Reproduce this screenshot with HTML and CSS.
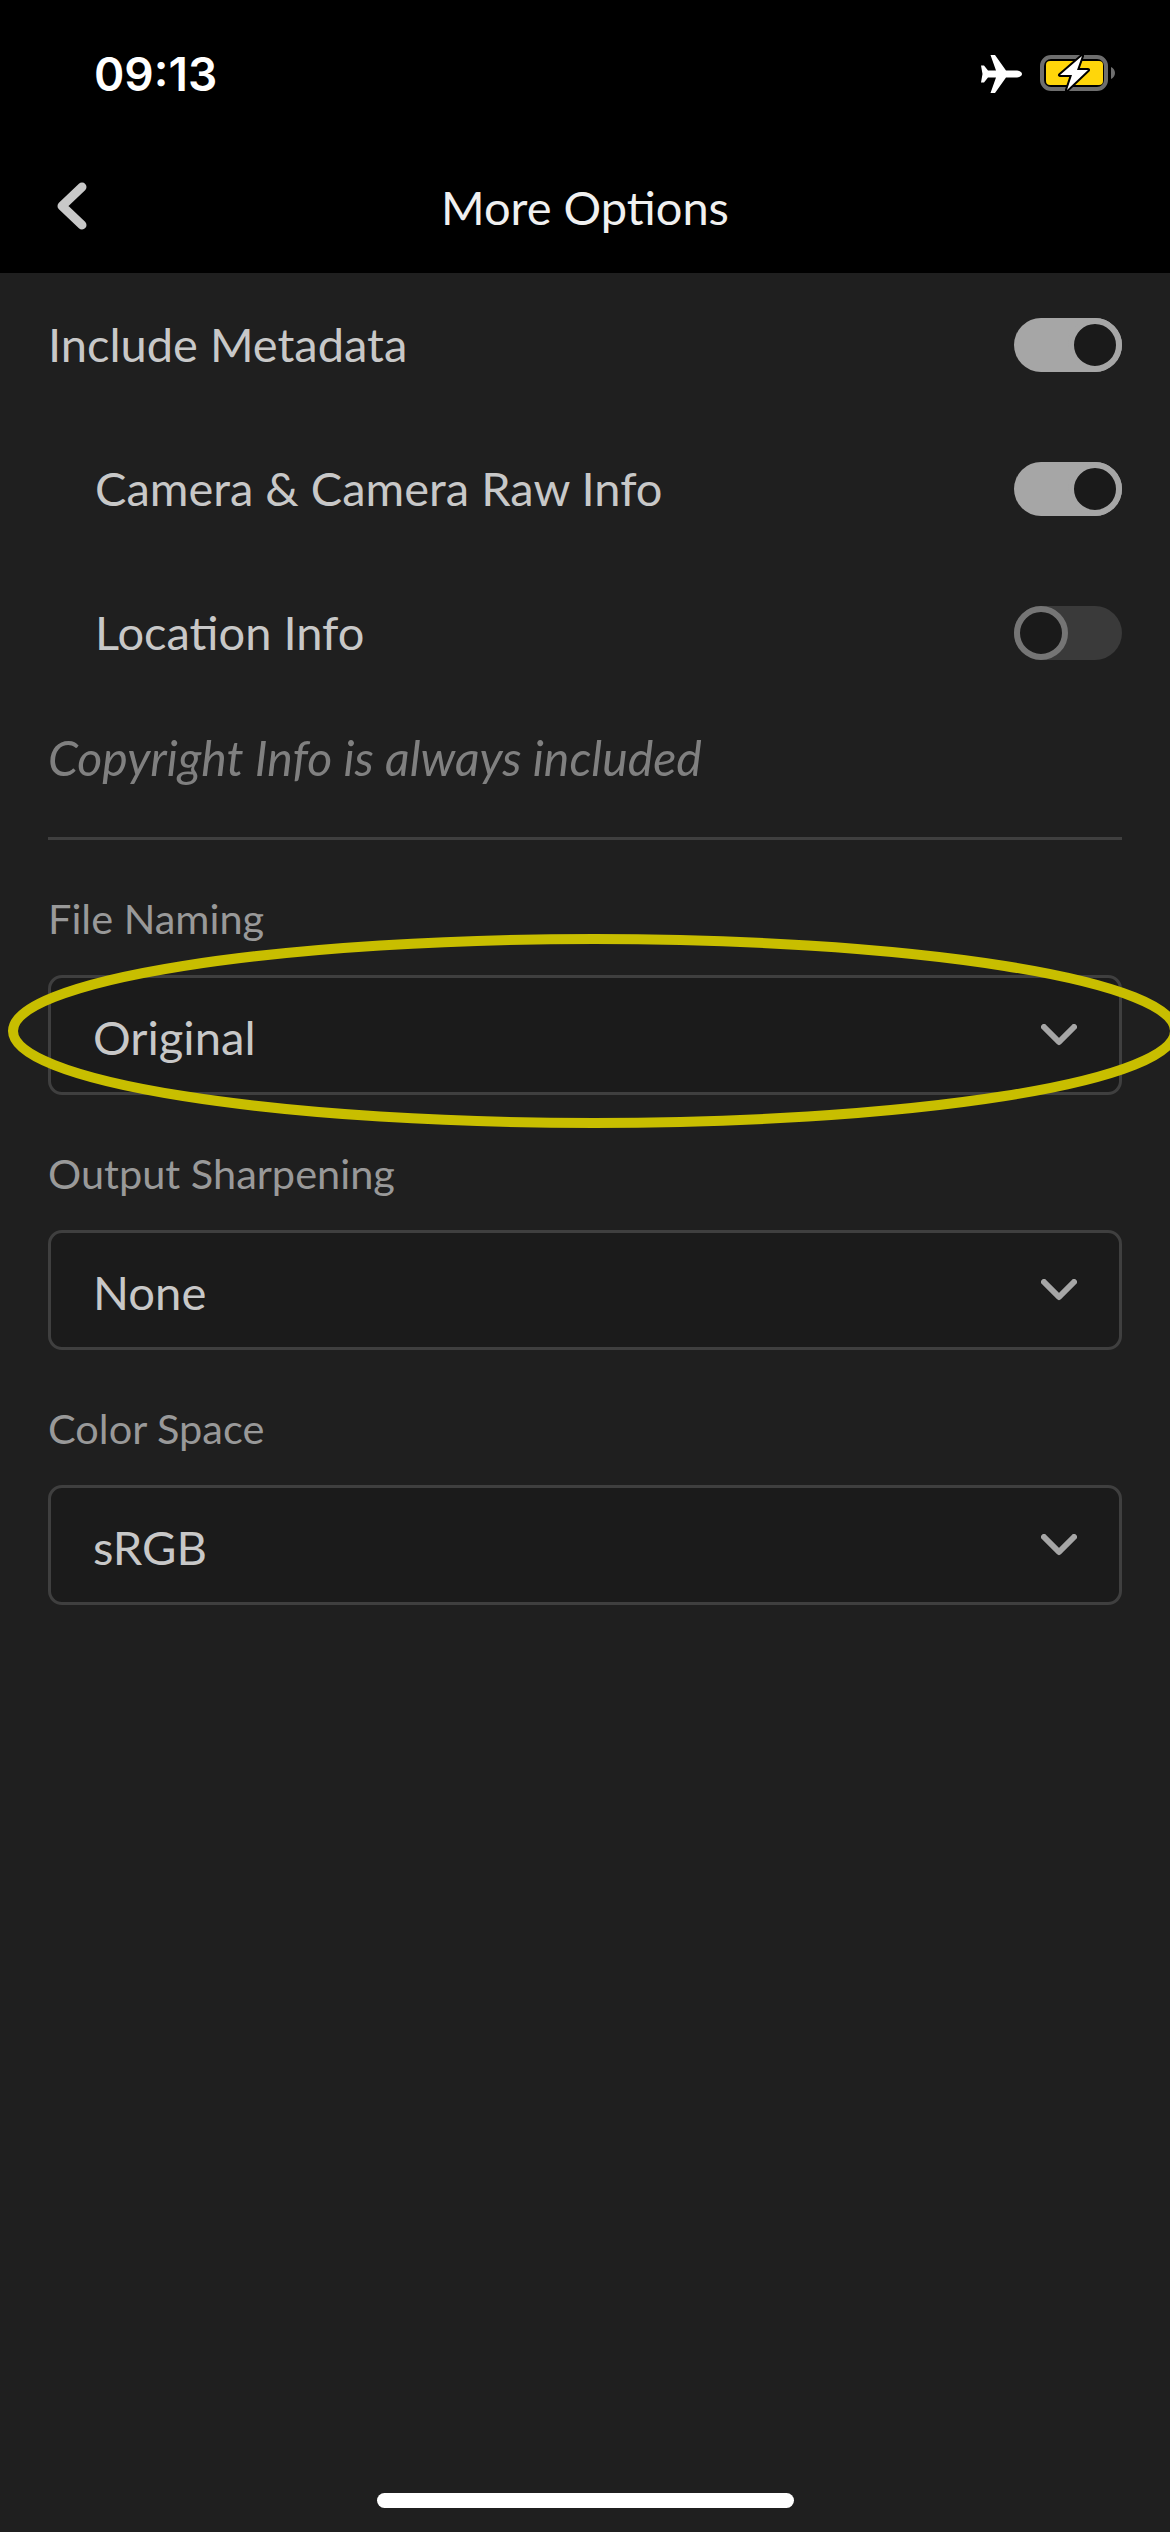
FILE: index.html
```html
<!DOCTYPE html>
<html lang="en">
<head>
  <meta charset="UTF-8">
  <meta name="viewport" content="width=device-width, initial-scale=1.0">
  <title>More Options</title>
  <link rel="stylesheet" href="styles.css">
</head>
<body>
  <div class="screen">
    <header class="top">
      <div class="status">
        <span class="time">09:13</span>
        <div class="status-icons">
          <svg class="plane" width="42" height="38" viewBox="0 0 42 38">
            <path d="M42 19c0 2-3 3.5-6 3.5H26L15 38h-4.500L16 22.500H8L4 27.500H1L2.500 19 1 10.500h3l4 5h8L10.500 0H15l11 15.500h10c3 0 6 1.500 6 3.500z" fill="#fff"/>
          </svg>
          <svg class="battery" width="75" height="36" viewBox="0 0 75 36">
            <rect x="2" y="2" width="64" height="32" rx="9" fill="none" stroke="#6e6e6e" stroke-width="4"/>
            <rect x="6" y="6" width="57" height="24" rx="4" fill="#ffd60a"/>
            <path d="M71 12c2.500 1 4 3.500 4 6s-1.500 5-4 6z" fill="#6e6e6e"/>
            <path d="M42 1L20 20h12l-5 15 21-20H37z" fill="#fff" stroke="#000" stroke-width="4" stroke-linejoin="round" paint-order="stroke"/>
          </svg>
        </div>
      </div>
      <nav class="navbar">
        <a class="back" href="#" aria-label="Back">
          <svg width="30" height="48" viewBox="0 0 30 48">
            <path d="M25 5L5 24l20 19" fill="none" stroke="#c8c8c8" stroke-width="9" stroke-linecap="round" stroke-linejoin="round"/>
          </svg>
        </a>
        <h1>More Options</h1>
      </nav>
    </header>

    <main class="content">
      <div class="row">
        <span class="row-label">Include Metadata</span>
        <span class="toggle on"><span class="knob"></span></span>
      </div>
      <div class="row sub">
        <span class="row-label">Camera &amp; Camera Raw Info</span>
        <span class="toggle on"><span class="knob"></span></span>
      </div>
      <div class="row sub">
        <span class="row-label">Location Info</span>
        <span class="toggle"><span class="knob"></span></span>
      </div>
      <p class="note">Copyright Info is always included</p>
      <hr class="divider">

      <div class="field">
        <label class="field-label">File Naming</label>
        <div class="select">
          <span>Original</span>
          <svg width="36" height="22" viewBox="0 0 36 22"><path d="M3 3l15 15L33 3" fill="none" stroke="#a6a6a6" stroke-width="6" stroke-linecap="round" stroke-linejoin="round"/></svg>
        </div>
      </div>
      <div class="field">
        <label class="field-label">Output Sharpening</label>
        <div class="select">
          <span>None</span>
          <svg width="36" height="22" viewBox="0 0 36 22"><path d="M3 3l15 15L33 3" fill="none" stroke="#a6a6a6" stroke-width="6" stroke-linecap="round" stroke-linejoin="round"/></svg>
        </div>
      </div>
      <div class="field">
        <label class="field-label">Color Space</label>
        <div class="select">
          <span>sRGB</span>
          <svg width="36" height="22" viewBox="0 0 36 22"><path d="M3 3l15 15L33 3" fill="none" stroke="#a6a6a6" stroke-width="6" stroke-linecap="round" stroke-linejoin="round"/></svg>
        </div>
      </div>
    </main>

    <div class="home-bar"></div>

    <!-- Yellow hand marking around File Naming -->
    <svg class="marker" width="1170" height="210" viewBox="0 0 1170 210">
      <ellipse cx="594" cy="105" rx="581" ry="92" fill="none" stroke="#c8be00" stroke-width="10"/>
    </svg>
  </div>
</body>
</html>
```

FILE: styles.css
```css
:root {
  --bg: #1f1f1f;
  --well: #1b1b1b;
  --line: #3f3f3f;
  --text: #c8c8c8;
  --muted: #999999;
  --on: #a6a6a6;
}
* { margin: 0; padding: 0; box-sizing: border-box; }
body {
  background: var(--bg);
  color: var(--text);
  font-family: Lato, "Open Sans", sans-serif;
}
.screen {
  position: relative;
  width: 1170px;
  height: 2532px;
  display: flex;
  flex-direction: column;
  overflow: hidden;
}

/* Header */
.top { background: #000; height: 273px; flex-shrink: 0; }
.status {
  height: 147px;
  display: flex;
  justify-content: space-between;
  align-items: flex-start;
  padding: 56px 55px 0 94px;
}
.time {
  font-family: Inter, sans-serif;
  font-weight: 600;
  font-size: 46px;
  line-height: 36px;
  color: #fff;
}
.status-icons { display: flex; align-items: flex-start; gap: 18px; margin-top: -1px; }
.navbar {
  height: 126px;
  display: flex;
  align-items: center;
  justify-content: center;
  position: relative;
}
.navbar h1 {
  font-weight: 400;
  font-size: 47px;
  margin-bottom: 6px;
  color: #f0f0f0;
}
.back {
  position: absolute;
  left: 57px;
  top: 35px;
  display: block;
  line-height: 0;
}

/* Rows */
.content { padding: 0 48px; flex: 1; }
.row {
  height: 144px;
  display: flex;
  align-items: center;
  justify-content: space-between;
}
.row.sub { padding-left: 47px; }
.row-label { font-size: 47px; margin-bottom: 3px; }
.toggle {
  width: 108px;
  height: 54px;
  border-radius: 27px;
  background: #3a3a3a;
  display: flex;
  justify-content: flex-start;
}
.toggle.on { background: var(--on); justify-content: flex-end; }
.knob {
  width: 54px;
  height: 54px;
  border-radius: 50%;
  background: #1a1a1a;
  border: 6px solid #757575;
}
.toggle.on .knob { border-color: var(--on); }
.note {
  height: 132px;
  padding-top: 23px;
  font-size: 48.200px;
  font-style: italic;
  color: #808080;
}
.divider { border: none; height: 3px; background: var(--line); }

/* Dropdowns */
.field { height: 255px; }
.field-label {
  display: block;
  height: 135px;
  padding-top: 53px;
  font-size: 41.500px;
  line-height: 50px;
  color: var(--muted);
}
.select {
  height: 120px;
  display: flex;
  align-items: center;
  justify-content: space-between;
  padding: 0 42px 0 42px;
  background: var(--well);
  border: 3px solid var(--line);
  border-radius: 14px;
  font-size: 47.200px;
}
.select span { margin-top: 2px; }

.home-bar {
  width: 417px;
  height: 15px;
  border-radius: 8px;
  background: #fff;
  margin: 0 auto 24px;
  flex-shrink: 0;
}
.marker {
  position: absolute;
  left: 0;
  top: 926px;
}
```
